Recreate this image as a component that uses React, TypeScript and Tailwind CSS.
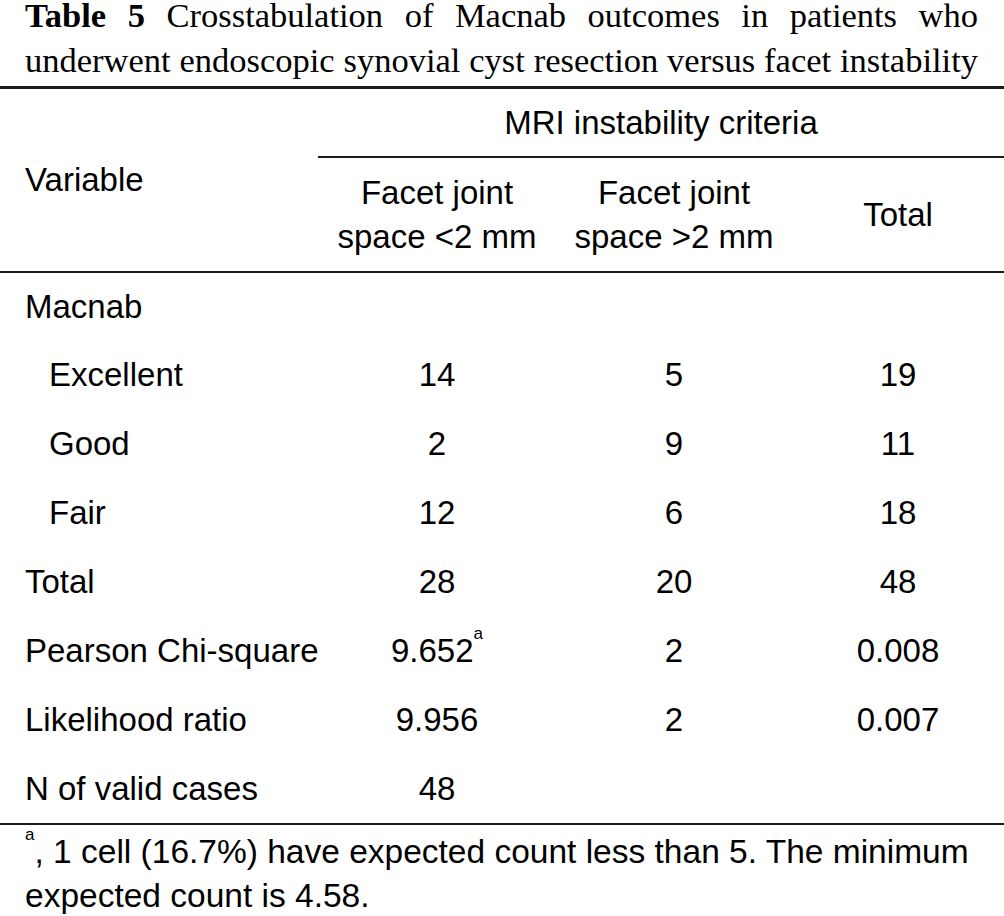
import React from "react";

type Row = {
  label: string;
  indent?: boolean;
  values: React.ReactNode[];
};

const Sup = () => (
  <sup className="relative -top-[23px] align-baseline text-[17px] leading-none">a</sup>
);

const rows: Row[] = [
  { label: "Macnab", values: ["", "", ""] },
  { label: "Excellent", indent: true, values: ["14", "5", "19"] },
  { label: "Good", indent: true, values: ["2", "9", "11"] },
  { label: "Fair", indent: true, values: ["12", "6", "18"] },
  { label: "Total", values: ["28", "20", "48"] },
  {
    label: "Pearson Chi-square",
    values: [
      <>
        9.652
        <Sup />
      </>,
      "2",
      "0.008",
    ],
  },
  { label: "Likelihood ratio", values: ["9.956", "2", "0.007"] },
  { label: "N of valid cases", values: ["48", "", ""] },
];

export default function App() {
  return (
    <div className="flex w-[1004px] flex-col bg-white text-black">
      {/* caption */}
      <div className="-mt-[7px] mb-[3px] pl-[25px] pr-[26px] font-['Liberation_Serif',serif] text-[34.5px] leading-[45px] whitespace-nowrap">
        <div className="[text-align-last:justify]">
          <span className="font-bold">Table 5</span> Crosstabulation of Macnab outcomes in patients who
        </div>
        <div className="[text-align-last:justify]">
          underwent endoscopic synovial cyst resection versus facet instability
        </div>
      </div>

      <div className="border-t-[3px] border-[#1c1c1c] font-['Liberation_Sans',Arial,sans-serif] text-[33px] leading-[44px]">
        {/* header */}
        <div className="grid grid-cols-[318px_238px_236px_212px] grid-rows-[69px_113px] border-b-2 border-[#1c1c1c]">
          <div className="row-span-2 flex items-center pl-[25px]">Variable</div>
          <div className="col-span-3 flex items-center justify-center border-b-2 border-[#1c1c1c]">
            MRI instability criteria
          </div>
          <div className="flex flex-col items-center justify-center">
            <span>Facet joint</span>
            <span>space &lt;2 mm</span>
          </div>
          <div className="flex flex-col items-center justify-center">
            <span>Facet joint</span>
            <span>space &gt;2 mm</span>
          </div>
          <div className="flex items-center justify-center">Total</div>
        </div>

        {/* body */}
        <div className="border-b-2 border-[#1c1c1c]">
          {rows.map((r, i) => (
            <div
              key={r.label}
              className={
                "grid grid-cols-[318px_238px_236px_212px] items-center whitespace-nowrap " +
                (i === 0 ? "h-[67px]" : "h-[69px]")
              }
            >
              <div className={r.indent ? "pl-[49px]" : "pl-[25px]"}>{r.label}</div>
              {r.values.map((v, j) => (
                <div key={j} className="text-center">
                  {v}
                </div>
              ))}
            </div>
          ))}
        </div>

        {/* footnote */}
        <div className="mt-[5px] whitespace-nowrap pl-[25px] text-[33.5px]">
          <div>
            <Sup />, 1 cell (16.7%) have expected count less than 5. The minimum
          </div>
          <div>expected count is 4.58.</div>
        </div>
      </div>
    </div>
  );
}
